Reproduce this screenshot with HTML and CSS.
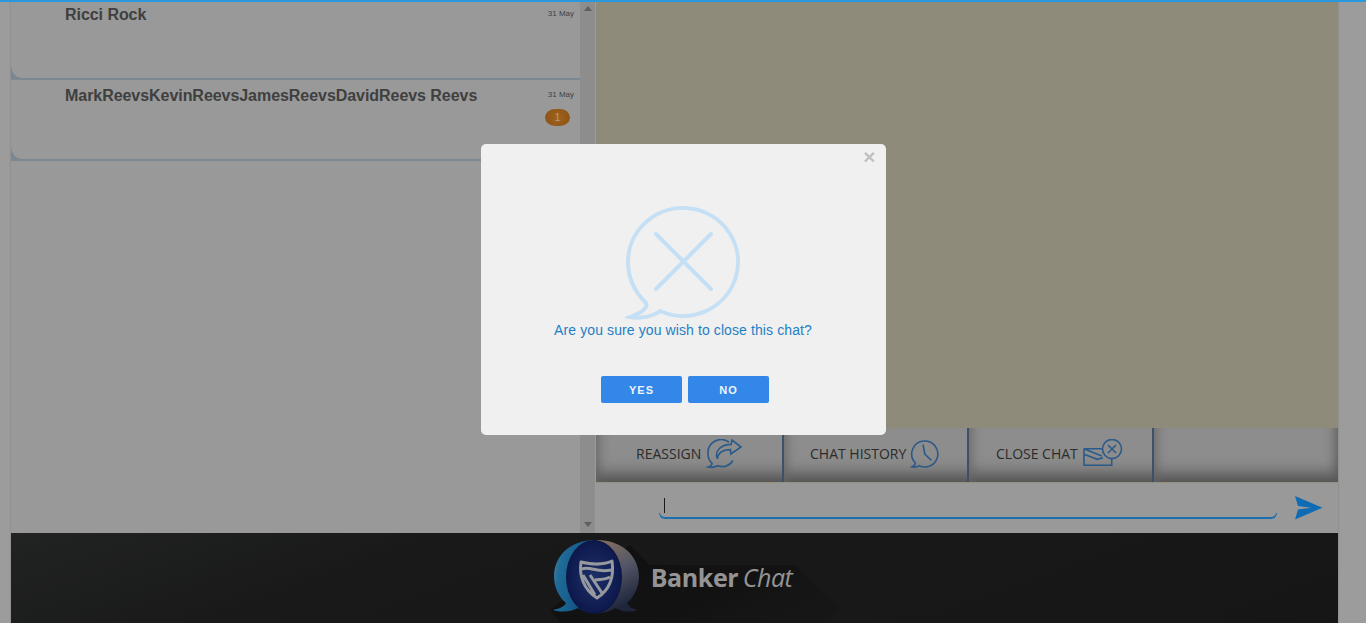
FILE: index.html
```html
<!DOCTYPE html>
<html lang="en">
<head>
    <meta charset="UTF-8">
    <title>Banker Chat</title>
    <link rel="stylesheet" href="styles.css">
</head>
<body>
    <div class="top-bar"></div>

    <div class="app">
        <div class="main">
            <!-- Chat list -->
            <div class="list-panel">
                <div class="list">
                    <div class="item item-first">
                        <div class="item-name">Ricci Rock</div>
                        <div class="item-side"><span class="item-date">31 May</span></div>
                    </div>
                    <div class="item">
                        <div class="item-name">MarkReevsKevinReevsJamesReevsDavidReevs Reevs</div>
                        <div class="item-side">
                            <span class="item-date">31 May</span>
                            <span class="badge">1</span>
                        </div>
                    </div>
                </div>
                <div class="scrollbar">
                    <span class="arrow-up"></span>
                    <span class="arrow-down"></span>
                </div>
            </div>

            <!-- Conversation -->
            <div class="chat-panel">
                <div class="messages"></div>
                <div class="toolbar">
                    <div class="tool tool-reassign">
                        <span>REASSIGN</span>
                        <svg class="tool-icon" width="38" height="30" viewBox="0 0 38 30">
                            <path d="M24 3.200A13.200 13.200 0 0 0 3 15C3 19 4.600 22 7 24.200C7 26 5.400 27.200 3 28C7 28.900 10 28.300 12.400 26.800C18 28.800 24.400 27.400 28 21.500"/>
                            <path d="M12.500 20C12.500 14 18 10.400 25.500 10.600L25.800 15L36 8L27 1L26.200 5.400C17 5.400 8.500 11.500 12.500 20Z"/>
                        </svg>
                    </div>
                    <div class="tool tool-history">
                        <span>CHAT HISTORY</span>
                        <svg class="tool-icon" width="30" height="30" viewBox="0 0 30 30">
                            <path d="M15 2A13 13 0 1 1 9.200 26.700C7.200 28 4.800 28.400 2 27.800C4 27 5.200 25.800 5.400 24A13 13 0 0 1 15 2Z"/>
                            <path d="M13 5.500L14.800 15L21.500 21.500"/>
                        </svg>
                    </div>
                    <div class="tool tool-close">
                        <span>CLOSE CHAT</span>
                        <svg class="tool-icon" width="40" height="30" viewBox="0 0 40 30">
                            <path d="M19.500 9.700H1L18.700 17M1 15.300L14.300 20.300L20 18.700M1 9.700V26.300H28.700V19.300"/>
                            <circle cx="29" cy="10" r="9.500"/>
                            <path d="M25 6L33 14M33 6L25 14"/>
                        </svg>
                    </div>
                    <div class="tool tool-empty"></div>
                </div>
                <div class="compose">
                    <div class="compose-field">
                        <span class="caret"></span>
                        <div class="compose-line"></div>
                    </div>
                    <svg class="send" width="28" height="24" viewBox="0 0 28 24">
                        <polygon points="0,0 27.500,11.700 0,23.500 3,13.500 16,11.700 3,10"/>
                    </svg>
                </div>
            </div>
        </div>

        <!-- Footer logo -->
        <footer class="footer">
            <svg class="footer-shadow" width="300" height="90" viewBox="0 0 300 90">
                <defs>
                    <linearGradient id="longShadow" x1="0" y1="0" x2="1" y2="0.6">
                        <stop offset="0" stop-color="#151515"/>
                        <stop offset="0.7" stop-color="#191919"/>
                        <stop offset="1" stop-color="#1e1e1e"/>
                    </linearGradient>
                </defs>
                <polygon fill="url(#longShadow)" points="89,12 109,32 254,32 297,75 279,90 19,90 9,77"/>
            </svg>
            <svg class="logo" width="105" height="90" viewBox="0 0 105 90">
                <defs>
                    <linearGradient id="leftBubble" x1="0" y1="0" x2="1" y2="0.3">
                        <stop offset="0" stop-color="#7ab2c8"/>
                        <stop offset="0.25" stop-color="#2a8fcc"/>
                        <stop offset="1" stop-color="#1468a8"/>
                    </linearGradient>
                    <linearGradient id="rightBubble" x1="0" y1="0" x2="0.3" y2="1">
                        <stop offset="0" stop-color="#b8967f"/>
                        <stop offset="0.5" stop-color="#707488"/>
                        <stop offset="1" stop-color="#2a3350"/>
                    </linearGradient>
                    <radialGradient id="coin" cx="0.5" cy="0.5" r="0.6">
                        <stop offset="0" stop-color="#27408a"/>
                        <stop offset="0.75" stop-color="#14246a"/>
                        <stop offset="1" stop-color="#0b1440"/>
                    </radialGradient>
                </defs>
                <path fill="url(#rightBubble)" d="M52 7C76 7 94 22 94 44C94 55 88 65 82 70C84 74 88 76 92 77C84 80 76 78 70 75C64 79 58 80 52 80Z"/>
                <path fill="url(#leftBubble)" d="M50 7C26 7 9 22 9 44C9 55 15 65 21 70C19 74 13 76 8 77C18 80 28 78 33 75C39 79 44 80 50 80Z"/>
                <ellipse cx="49" cy="44" rx="28" ry="37" fill="url(#coin)"/>
                <path fill="none" stroke="#c8ccd2" stroke-width="3" stroke-linejoin="round" d="M36 29C45 31 56 33 67 28C69 42 66 56 52 65C38 56 34 42 36 29ZM37 36C45 33 52 40 66 37M38 42L50 62M45 42L57 60M50 47C55 46 60 47 65 44"/>
            </svg>
            <div class="brand"><b>Banker</b> <i>Chat</i></div>
        </footer>
    </div>

    <!-- Close chat dialog -->
    <div class="overlay">
        <div class="modal">
            <span class="modal-close">&times;</span>
            <svg class="modal-icon" width="116" height="116" viewBox="0 0 116 116">
                <path d="M21 99C11 89 3 75 3 58A55 54 0 1 1 35 107C29 112 17 115 5 113C13 110 24 105 21 99Z"/>
                <path d="M31 30L86 85M86 30L31 85"/>
            </svg>
            <p class="modal-text">Are you sure you wish to close this chat?</p>
            <div class="modal-buttons">
                <button class="modal-btn">YES</button>
                <button class="modal-btn">NO</button>
            </div>
        </div>
    </div>
</body>
</html>
```

FILE: styles.css
```css
/* Page frame */
html, body {
    height: 100%;
}

body {
    margin: 0;
    height: 623px;
    overflow: hidden;
    background-color: #d0d0d0;
    font-family: "Liberation Sans", Arial, sans-serif;
    display: flex;
    flex-direction: column;
}

.top-bar {
    height: 2px;
    flex-shrink: 0;
    background-color: #2a98dc;
    position: relative;
    z-index: 20;
}

.app {
    width: 1327px;
    margin-left: 11px;
    flex: 1;
    display: flex;
    flex-direction: column;
    box-shadow: 0 0 2px rgba(0, 0, 0, 0.2);
}

.main {
    height: 531px;
    display: flex;
    flex-shrink: 0;
}

/* Left list */
.list-panel {
    width: 584px;
    display: flex;
    flex-shrink: 0;
    background-color: #ccc;
}

.list {
    width: 569px;
}

.item {
    height: 79px;
    box-sizing: border-box;
    padding: 5px 10px 0 54px;
    display: flex;
    justify-content: space-between;
    border-bottom: 2px solid #a4b6c2;
    background: radial-gradient(ellipse 10px 12px at 100% 0, transparent 94%, #a0b4c4 100%) left bottom / 10px 12px no-repeat;
}

.item-first {
    height: 78px;
    padding-top: 4px;
    margin-bottom: 2px;
}

.item-name {
    font-size: 16px;
    font-weight: bold;
    line-height: 18px;
    letter-spacing: -0.05px;
    color: #555;
}

.item-side {
    display: flex;
    flex-direction: column;
    align-items: flex-end;
    padding-top: 2px;
    width: 40px;
}

.item-date {
    font-size: 8px;
    line-height: 12px;
    color: #4f5a66;
    margin-right: -4px;
}

.badge {
    width: 25px;
    height: 17px;
    margin-top: 8px;
    line-height: 17px;
    text-align: center;
    font-size: 11px;
    color: #eccb9c;
    background: radial-gradient(circle, #d8842a, #b86c18);
    border-radius: 12px / 10px;
}

.scrollbar {
    width: 15px;
    display: flex;
    flex-direction: column;
    justify-content: space-between;
    align-items: center;
    padding: 4px 0 6px;
    box-sizing: border-box;
    background-color: #bcbcbc;
}

.arrow-up {
    border-left: 4px solid transparent;
    border-right: 4px solid transparent;
    border-bottom: 5px solid #7f7f7f;
}

.arrow-down {
    border-left: 4px solid transparent;
    border-right: 4px solid transparent;
    border-top: 5px solid #7f7f7f;
}

/* Right conversation */
.chat-panel {
    flex: 1;
    margin-left: 1px;
    display: flex;
    flex-direction: column;
    background-color: #ccc;
}

.messages {
    height: 426px;
    background-color: #bfbaa5;
}

.toolbar {
    height: 54px;
    display: flex;
    background-color: #bcbcbc;
    box-shadow: inset 0 -18px 16px -10px #6a6a6a;
}

.tool {
    display: flex;
    align-items: center;
    box-sizing: border-box;
    padding-bottom: 4px;
    font-family: "Open Sans", sans-serif;
    font-size: 14px;
    color: #3a3a3a;
    border-right: 2px solid #4f6d88;
    box-shadow: inset 14px 0 12px -12px #888;
}

.tool-reassign {
    width: 188px;
    padding-left: 40px;
}

.tool-history {
    width: 185px;
    padding-left: 26px;
}

.tool-close {
    width: 185px;
    padding-left: 27px;
}

.tool-empty {
    flex: 1;
    border-right: none;
    box-shadow: inset 14px 0 12px -12px #888, inset -14px 0 12px -12px #777;
}

.tool-icon {
    margin: 2px 0 0 4px;
    fill: none;
    stroke: #3a78b8;
    stroke-width: 1.6;
}

.tool-close .tool-icon {
    margin-left: 5px;
}

.compose {
    flex: 1;
    display: flex;
    border-top: 1px solid #c6c2ae;
    padding-left: 63px;
}

.compose-field {
    width: 618px;
    padding-top: 15px;
}

.caret {
    display: block;
    width: 1px;
    height: 15px;
    margin-left: 5px;
    background-color: #222;
}

.compose-line {
    height: 4px;
    border: 1px solid #2394eb;
    border-top: none;
    border-bottom-width: 2px;
    border-radius: 0 0 6px 6px;
}

.send {
    margin: 13px 0 0 18px;
    fill: #1490f0;
}

/* Footer logo */
.footer {
    flex: 1;
    position: relative;
    display: flex;
    justify-content: center;
    background: linear-gradient(160deg, #2c302e 0, #222 28%, #1e1e1e 100%);
    overflow: hidden;
}

.footer-shadow {
    position: absolute;
    left: 530px;
    top: 0;
}

.logo {
    position: relative;
    margin-left: -12px;
}

.brand {
    position: relative;
    margin: 26px 0 0 1px;
    font-family: "Open Sans", sans-serif;
    font-size: 25px;
    line-height: 36px;
    word-spacing: -2px;
    color: #c6c6c6;
    white-space: nowrap;
}

.brand b {
    letter-spacing: -0.4px;
}

.brand i {
    font-weight: 400;
    letter-spacing: -0.5px;
}

/* Dialog */
.overlay {
    position: fixed;
    top: 0;
    left: 0;
    right: 0;
    bottom: 0;
    z-index: 10;
    background-color: rgba(0, 0, 0, 0.25);
    display: flex;
    justify-content: center;
    align-items: flex-start;
}

.modal {
    position: relative;
    width: 405px;
    height: 291px;
    margin-top: 144px;
    box-sizing: border-box;
    padding-top: 60px;
    background-color: #f0f0f0;
    border-radius: 5px;
    display: flex;
    flex-direction: column;
    align-items: center;
}

.modal-close {
    position: absolute;
    top: 2px;
    right: 10px;
    font-size: 21px;
    font-weight: bold;
    line-height: 21px;
    color: #c0c0c0;
}

.modal-icon {
    fill: none;
    stroke: #c5e0f5;
    stroke-width: 4;
    stroke-linecap: round;
    flex-shrink: 0;
}

.modal-text {
    margin: 2px 0 0;
    font-size: 14px;
    line-height: 16px;
    letter-spacing: 0.1px;
    color: #1f7fc4;
}

.modal-buttons {
    display: flex;
    gap: 6px;
    margin: 38px 0 0 4px;
}

.modal-btn {
    width: 81px;
    height: 27px;
    padding: 0;
    border: none;
    border-radius: 2px;
    background-color: #3287e8;
    color: #f0f4fa;
    font-family: "Liberation Sans", Arial, sans-serif;
    font-size: 11px;
    font-weight: bold;
    letter-spacing: 1px;
}
```
